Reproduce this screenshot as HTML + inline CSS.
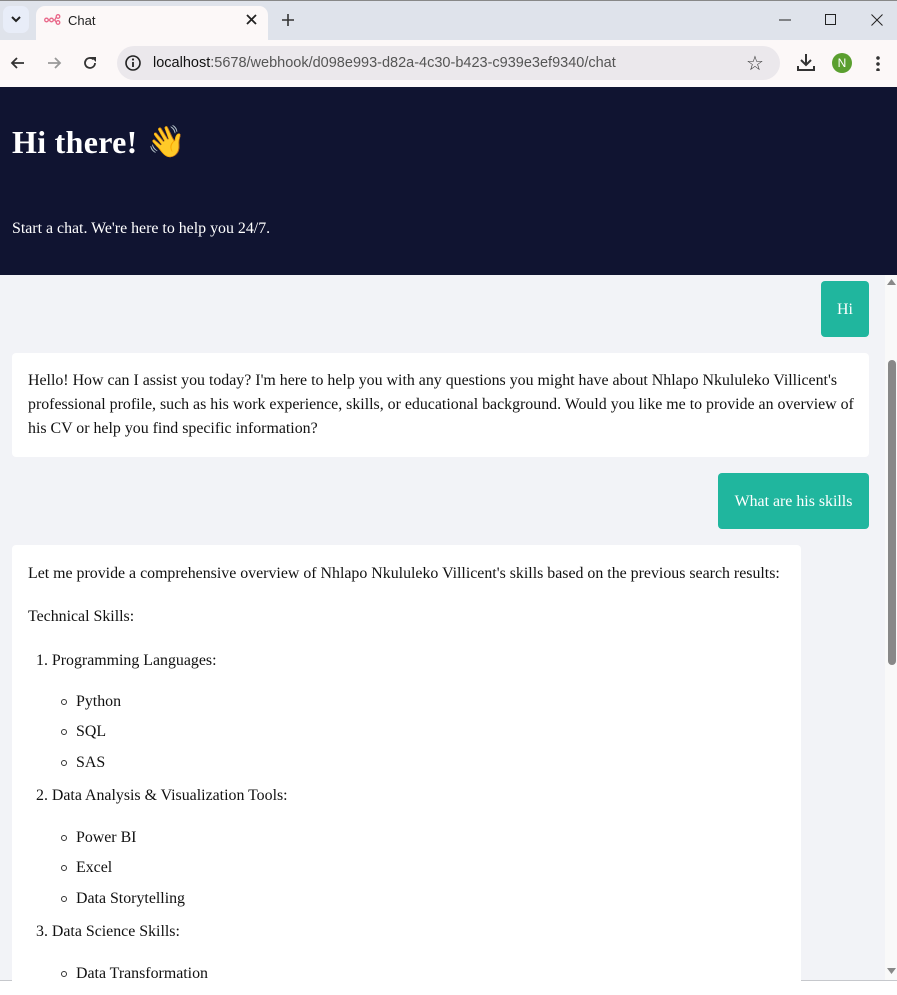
<!DOCTYPE html>
<html><head><style>
*{margin:0;padding:0;box-sizing:border-box}
body{width:897px;height:995px;overflow:hidden;background:#fff;font-family:"Liberation Serif",serif;position:relative}
.a{position:absolute}
.ui{font-family:"Liberation Sans",sans-serif}
.msg{position:absolute;background:#fff;border-radius:4px;font-size:15.9px;color:#111;line-height:24px}
.bot{padding:16px 14px 16px 16px}
.usr{background:#20b69e;color:#fff;border-radius:4px;position:absolute;font-size:15.9px;display:flex;align-items:center;justify-content:center;padding-top:2px}
.t{position:absolute;font-size:15.9px;color:#111;white-space:nowrap}
.c{position:absolute;width:6px;height:6px;border:1px solid #333;border-radius:50%}
</style></head><body>
<div class="a" style="left:0;top:0;width:897px;height:40px;background:#dfe3eb;border-top:1px solid #888"></div>
<div class="a" style="left:3px;top:6px;width:26px;height:27px;background:#e8edf8;border-radius:7px"></div>
<svg class="a" style="left:10px;top:14px" width="12" height="10"><path d="M2 3l4 4 4-4" stroke="#222" stroke-width="2" fill="none"/></svg>
<div class="a" style="left:36px;top:6px;width:232px;height:36px;background:#fcf8f8;border-radius:9px 9px 0 0"></div>
<svg class="a" style="left:44px;top:14px" width="17" height="11"><g stroke="#e9688a" stroke-width="1.3" fill="none"><circle cx="2.5" cy="6" r="1.8"/><circle cx="7.5" cy="6" r="1.8"/><circle cx="14" cy="2.5" r="1.8"/><circle cx="14" cy="8.5" r="1.8"/><path d="M4.3 6h1.4M9.3 6h1.5l1.5-3M10.8 6l1.5 2.5"/></g></svg>
<div class="a ui" style="left:68px;top:13px;font-size:13px;color:#222">Chat</div>
<svg class="a" style="left:246px;top:14px" width="11" height="11"><path d="M1 1l9 9M10 1l-9 9" stroke="#222" stroke-width="1.8"/></svg>
<svg class="a" style="left:282px;top:14px" width="12" height="12"><path d="M6 0v12M0 6h12" stroke="#333" stroke-width="1.6"/></svg>
<svg class="a" style="left:779px;top:19px" width="12" height="2"><path d="M0 1h12" stroke="#222"/></svg>
<svg class="a" style="left:825px;top:14px" width="11" height="11"><rect x=".5" y=".5" width="10" height="10" stroke="#222" fill="none"/></svg>
<svg class="a" style="left:871px;top:14px" width="12" height="12"><path d="M.5.5l11 11M11.5.5l-11 11" stroke="#222"/></svg>
<div class="a" style="left:0;top:40px;width:897px;height:47px;background:#fcf8f8"></div>
<svg class="a" style="left:10px;top:55px" width="16" height="16"><path d="M14 8H2M7 3L2 8l5 5" stroke="#333" stroke-width="1.8" fill="none"/></svg>
<svg class="a" style="left:46px;top:55px" width="16" height="16"><path d="M2 8h12M9 3l5 5-5 5" stroke="#999" stroke-width="1.8" fill="none"/></svg>
<svg class="a" style="left:82px;top:55px" width="16" height="16"><path d="M13 8a5 5 0 1 1-1.5-3.6" stroke="#333" stroke-width="1.8" fill="none"/><path d="M9 2h5v5z" fill="#333"/></svg>
<div class="a" style="left:117px;top:46px;width:663px;height:34px;background:#ebe8ec;border-radius:17px"></div>
<svg class="a" style="left:124px;top:54px" width="18" height="18"><circle cx="9" cy="9" r="7" stroke="#222" stroke-width="1.6" fill="none"/><path d="M9 8v5" stroke="#222" stroke-width="1.8"/><circle cx="9" cy="5.5" r="1.1" fill="#222"/></svg>
<div class="a ui" style="left:153px;top:55px;font-size:14.5px;color:#555"><span style="color:#111">localhost</span>:5678/webhook/d098e993-d82a-4c30-b423-c939e3ef9340/chat</div>
<div class="a" style="left:746px;top:51px;font-size:20px;color:#333">☆</div>
<svg class="a" style="left:797px;top:53px" width="18" height="18"><path d="M9 1v10M4 7l5 5 5-5M1 13v4h16v-4" stroke="#333" stroke-width="2" fill="none"/></svg>
<div class="a ui" style="left:832px;top:53px;width:20px;height:20px;border-radius:50%;background:#5a9f2f;color:#fff;font-size:12px;text-align:center;line-height:20px">N</div>
<div class="a" style="left:876px;top:55px;width:4px;height:16px;background:radial-gradient(circle,#333 1.6px,transparent 2px) 0 0/4px 6px"></div>
<div class="a" style="left:0;top:87px;width:897px;height:188px;background:#101431"></div>
<div class="a" style="left:12px;top:124px;font-size:32px;font-weight:bold;color:#fff;letter-spacing:0.3px">Hi there!</div>
<div class="a" style="left:147px;top:123px;font-family:'Noto Color Emoji',sans-serif;font-size:31px">👋</div>
<div class="a" style="left:12px;top:220px;font-size:15.9px;color:#fff">Start a chat. We're here to help you 24/7.</div>
<div class="a" style="left:0;top:275px;width:885px;height:705px;background:#f2f3f7"></div>
<div class="a" style="left:885px;top:275px;width:12px;height:705px;background:#f9f9f9"></div>
<div class="a" style="left:888px;top:360px;width:8px;height:305px;background:#888;border-radius:4px"></div>
<svg class="a" style="left:887px;top:279px" width="9" height="7"><path d="M0 6h9L4.5 0z" fill="#888"/></svg>
<svg class="a" style="left:887px;top:968px" width="9" height="7"><path d="M0 0h9L4.5 6z" fill="#888"/></svg>
<div class="a" style="left:0;top:980px;width:897px;height:1px;background:#c6c8cc"></div>
<div class="usr" style="left:821px;top:281px;width:48px;height:56px">Hi</div>
<div class="msg bot" style="left:12px;top:353px;width:857px;height:104px">Hello! How can I assist you today? I'm here to help you with any questions you might have about Nhlapo Nkululeko Villicent's<br>professional profile, such as his work experience, skills, or educational background. Would you like me to provide an overview of<br>his CV or help you find specific information?</div>
<div class="usr" style="left:718px;top:473px;width:151px;height:56px">What are his skills</div>
<div class="msg" style="left:12px;top:545px;width:789px;height:440px"></div>
<div class="t" style="left:28px;top:565px">Let me provide a comprehensive overview of Nhlapo Nkululeko Villicent's skills based on the previous search results:</div>
<div class="t" style="left:28px;top:608px">Technical Skills:</div>
<div class="t" style="left:36px;top:652px">1. Programming Languages:</div>
<div class="c" style="left:61px;top:699px"></div><div class="t" style="left:76px;top:693px">Python</div>
<div class="c" style="left:61px;top:729px"></div><div class="t" style="left:76px;top:723px">SQL</div>
<div class="c" style="left:61px;top:760px"></div><div class="t" style="left:76px;top:754px">SAS</div>
<div class="t" style="left:36px;top:787px">2. Data Analysis &amp; Visualization Tools:</div>
<div class="c" style="left:61px;top:835px"></div><div class="t" style="left:76px;top:829px">Power BI</div>
<div class="c" style="left:61px;top:865px"></div><div class="t" style="left:76px;top:859px">Excel</div>
<div class="c" style="left:61px;top:896px"></div><div class="t" style="left:76px;top:890px">Data Storytelling</div>
<div class="t" style="left:36px;top:923px">3. Data Science Skills:</div>
<div class="c" style="left:61px;top:971px"></div><div class="t" style="left:76px;top:965px">Data Transformation</div>
<div class="a" style="left:0;top:981px;width:897px;height:14px;background:#fff"></div>
</body></html>
